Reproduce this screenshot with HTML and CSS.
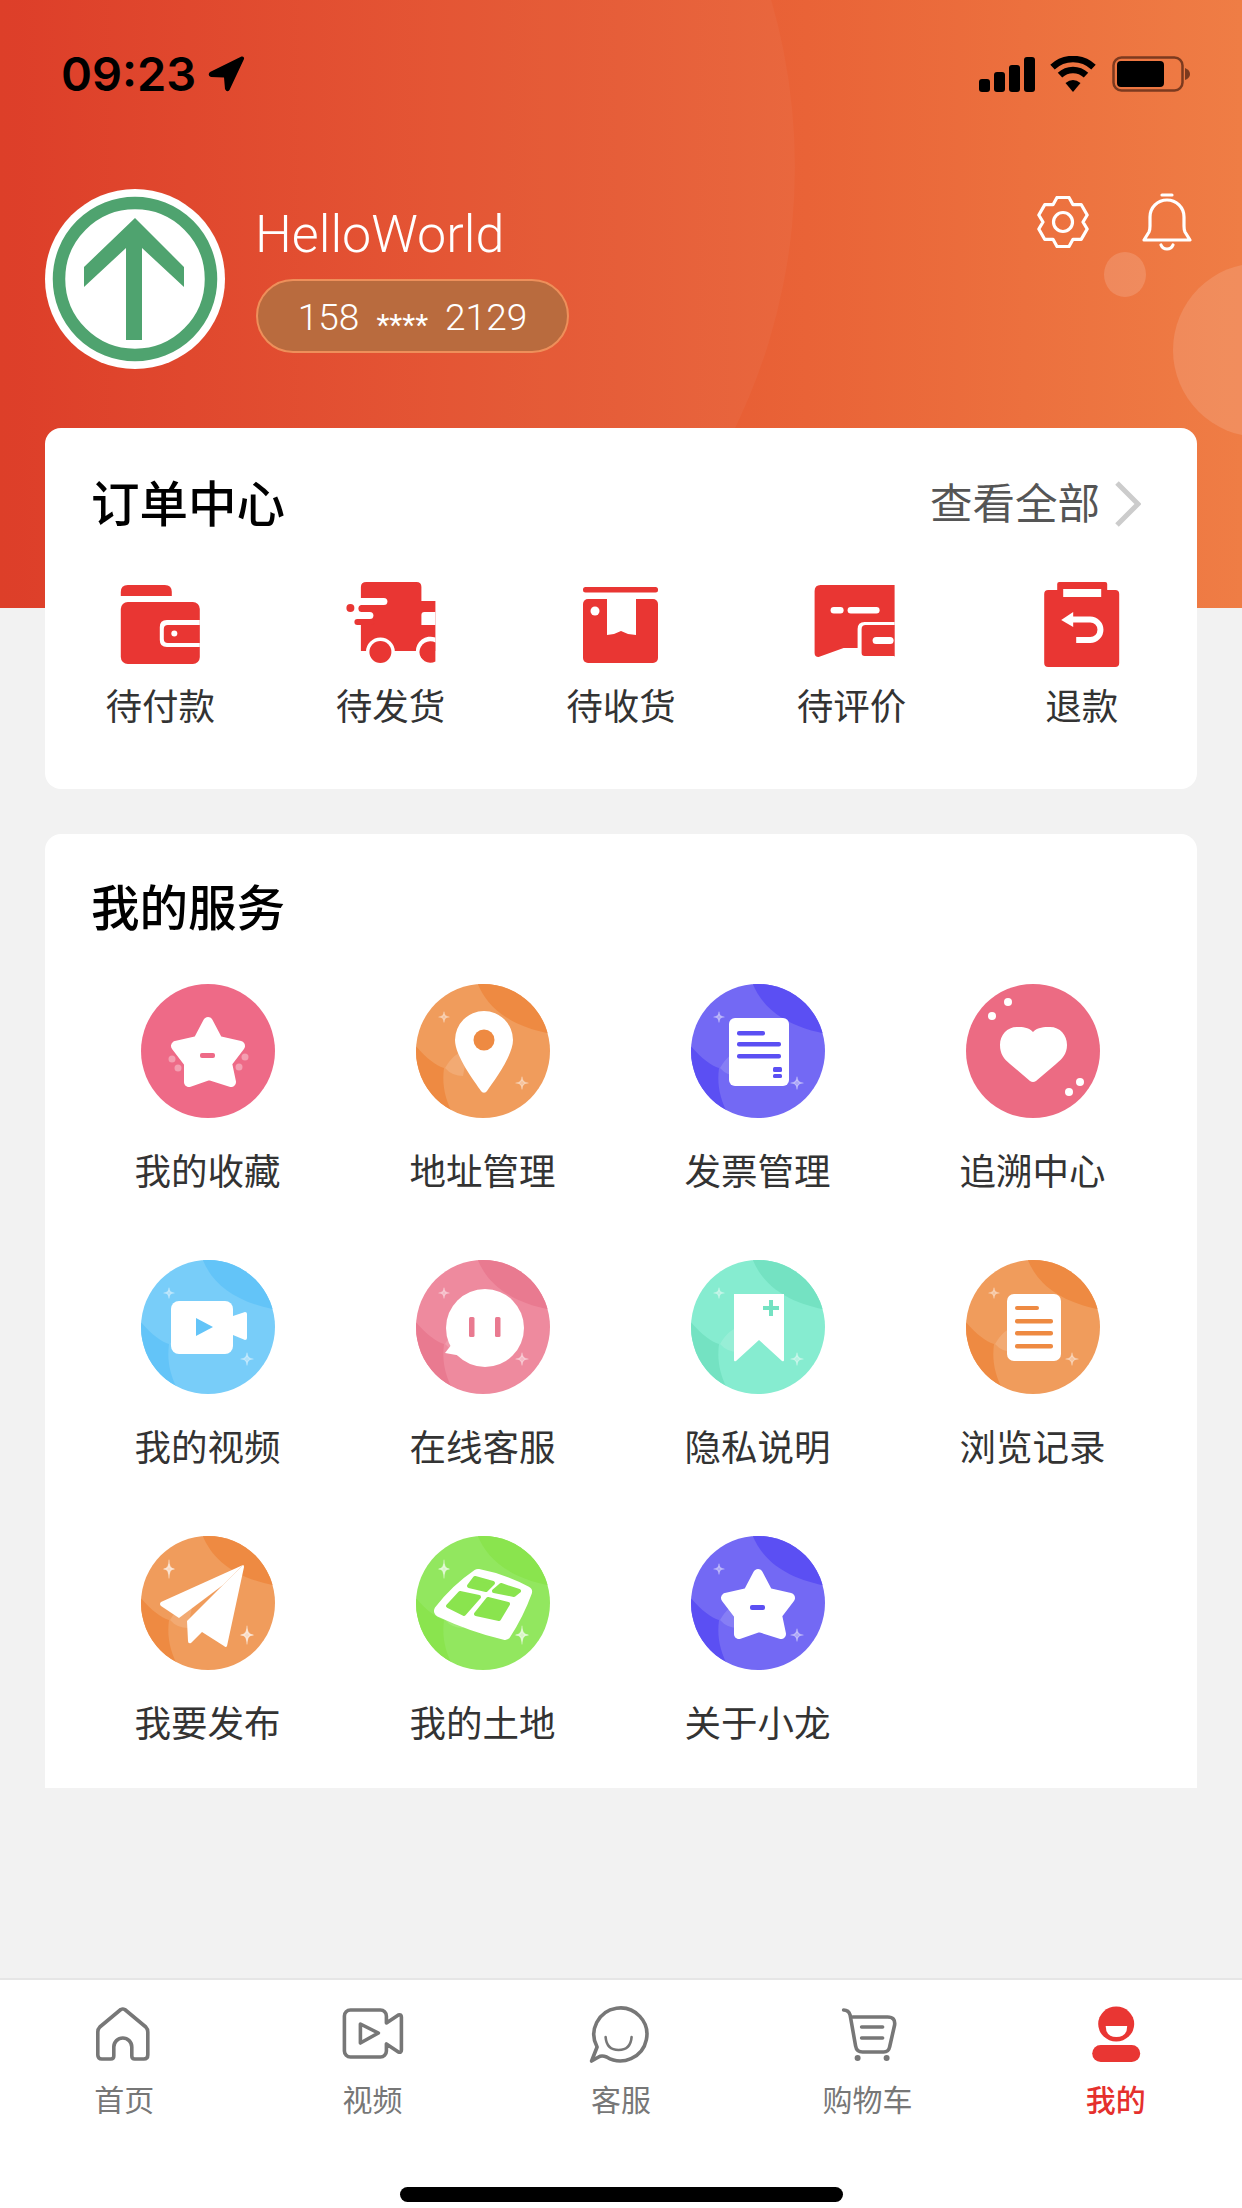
FILE: index.html
```html
<!DOCTYPE html>
<html lang="zh-CN">
<head>
<meta charset="utf-8">
<title>我的</title>
<link rel="stylesheet" href="styles.css">
</head>
<body>
<svg class="defs" aria-hidden="true">
  <defs>
    <clipPath id="cc"><circle cx="67" cy="67" r="67"/></clipPath>
    <symbol id="swirl" viewBox="0 0 134 134">
      <circle class="sw-l" cx="67" cy="67" r="67"/>
      <g clip-path="url(#cc)">
        <path class="sw-d" d="M61 -2C70 22 92 42 136 50V-2Z"/>
        <path class="sw-d" d="M-2 60C10 74 20 82 28 84C26 100 28 115 40 136H-2Z"/>
        <path class="sw-h" d="M29 84Q38 68 52 66L47 92Q36 92 29 84Z"/>
      </g>
      <path class="sw-s" d="M28 28Q28 33 33 33Q28 33 28 38Q28 33 23 33Q28 33 28 28Z"/>
      <path class="sw-s" d="M106 93Q106 99 112 99Q106 99 106 105Q106 99 100 99Q106 99 106 93Z"/>
    </symbol>
    <symbol id="star" viewBox="0 0 134 134">
      <path class="star-shape" d="M67 38L77 57L99 62L86 79L90 98L68 91L48 98L48 79L35 62L57 57Z"/>
      <rect class="ic-ink" x="59" y="69" width="15" height="5" rx="2"/>
    </symbol>
    <symbol id="spark-lg" viewBox="0 0 134 134">
      <path class="sw-s" d="M28 24Q28 33 33 33Q28 33 28 42Q28 33 23 33Q28 33 28 24Z"/>
      <path class="sw-s" d="M106 90Q106 99 112 99Q106 99 106 108Q106 99 100 99Q106 99 106 90Z"/>
    </symbol>
  </defs>
</svg>

<div class="page">
  <header class="hero">
    <div class="glow glow-a"></div>
    <div class="glow glow-b"></div>
    <div class="glow glow-c"></div>

    <div class="status">
      <div class="status-left">
        <span class="time">09:23</span>
        <svg class="loc" viewBox="0 0 37 37"><path d="M33.5.5L2 16Q-1 19 3 21L16 21.5L17 33Q19 37 21.5 34L36 3Q36.5 0 33.5.5Z"/></svg>
      </div>
      <div class="status-right">
        <svg class="signal" viewBox="0 0 56 35">
          <rect x="0" y="22" width="11" height="13" rx="3"/>
          <rect x="15" y="15" width="11" height="20" rx="3"/>
          <rect x="30" y="8" width="11" height="27" rx="3"/>
          <rect x="45" y="0" width="11" height="35" rx="3"/>
        </svg>
        <svg class="wifi" viewBox="0 0 48 36">
          <path class="wifi-arc" d="M3.5 11.1A30 30 0 0 1 44.5 11.1"/>
          <path class="wifi-arc" d="M11 19.1A19 19 0 0 1 37 19.1"/>
          <path d="M24 36L16.5 27Q24 21 31.5 27Z"/>
        </svg>
        <svg class="battery" viewBox="0 0 78 36">
          <rect class="bat-shell" x="1.5" y="1.5" width="69" height="33" rx="8"/>
          <rect x="5" y="5" width="47" height="26" rx="4"/>
          <path class="bat-nub" d="M73 12Q78 14 78 18Q78 22 73 24Z"/>
        </svg>
      </div>
    </div>

    <div class="profile">
      <svg class="avatar" viewBox="0 0 180 180">
        <circle class="av-bg" cx="90" cy="90" r="90"/>
        <circle class="av-ring" cx="90" cy="90" r="76"/>
        <path class="av-arrow" d="M90 29L139 78V98L97 59V151H81V59L39 98V78Z"/>
      </svg>
      <div class="who">
        <div class="name">HelloWorld</div>
        <div class="phone"><span>158</span><span class="stars">****</span><span>2129</span></div>
      </div>
      <div class="hero-actions">
        <svg class="gear" viewBox="0 0 52 52">
          <path d="M20 1.5H32L36 8.7L44.2 8.55L50.2 18.95L46 26L50.2 33L44.2 43.4L36 43.3L32 50.5H20L16 43.3L7.8 43.45L1.8 33L6 26L1.8 19L7.8 8.6L16 8.7Z"/>
          <circle cx="26" cy="26" r="9.5"/>
        </svg>
        <svg class="bell" viewBox="0 0 52 60">
          <path d="M21 2H31"/>
          <path d="M3 47L8 39Q9 37 9 33V24A17 17 0 0 1 43 24V33Q43 37 44 39L49 47Z"/>
          <path d="M20 52A6.5 6.5 0 0 0 32 52"/>
        </svg>
      </div>
    </div>
  </header>

  <main class="content">
    <section class="card card-orders">
      <div class="card-head">
        <h2 class="card-title">订单中心</h2>
        <div class="see-all">
          <span>查看全部</span>
          <svg class="chev" viewBox="0 0 26 46"><path d="M2 2L23 23L2 44"/></svg>
        </div>
      </div>
      <div class="orders">
        <div class="order">
          <svg class="order-ic" viewBox="0 0 90 90"><g transform="translate(5.8 5)">
            <path class="red" d="M0 11V7Q0 0 7 0H44Q51 0 51 7V11Z"/>
            <rect class="red" x="0" y="17" width="79" height="62" rx="7"/>
            <path class="wht" d="M79 35H46Q39 35 39 42V55Q39 62 46 62H79Z"/>
            <path class="red" d="M79 40H47Q43 40 43 44V54Q43 58 47 58H79Z"/>
            <circle class="wht" cx="53.5" cy="48.5" r="3"/>
          </g></svg>
          <span class="order-label">待付款</span>
        </div>
        <div class="order">
          <svg class="order-ic" viewBox="0 0 90 90"><g transform="translate(.4 2)">
            <path class="red" d="M14.5 5Q14.5 0 20 0H70Q75 0 75 5V19H89V69H14.5Z"/>
            <path class="wht" d="M89 30H78Q75 30 75 33V43H89Z"/>
            <rect class="wht" x="8" y="16" width="33" height="7" rx="3.5"/>
            <rect class="wht" x="8" y="30" width="19" height="7" rx="3.5"/>
            <rect class="red" x="12" y="23" width="20" height="7" rx="3.5"/>
            <rect class="red" x="8" y="37" width="20" height="6" rx="3"/>
            <circle class="red" cx="4" cy="26" r="4"/>
            <circle class="wht" cx="34" cy="70" r="14.5"/>
            <circle class="red" cx="34" cy="70" r="11"/>
            <path class="wht" d="M89 55.6A14.5 14.5 0 0 0 69.5 70A14.5 14.5 0 0 0 89 84.4Z"/>
            <path class="red" d="M89 60.5A11 11 0 0 0 73 70A11 11 0 0 0 89 79.5Z"/>
          </g></svg>
          <span class="order-label">待发货</span>
        </div>
        <div class="order">
          <svg class="order-ic" viewBox="0 0 90 90"><g transform="translate(7 7)">
            <rect class="red" x="0" y="0" width="75" height="5.5" rx="2.5"/>
            <rect class="red" x="0" y="12" width="75" height="64" rx="5"/>
            <path class="wht" d="M24 12H53V48L45 47L38 44L31 47L24 48Z"/>
            <circle class="wht" cx="12" cy="24" r="4.5"/>
          </g></svg>
          <span class="order-label">待收货</span>
        </div>
        <div class="order">
          <svg class="order-ic" viewBox="0 0 90 90"><g transform="translate(8.6 5)">
            <path class="red" d="M6 0H80V72L47 70V63H29L4 72Q0 72 0 68V6Q0 0 6 0Z"/>
            <path class="wht" d="M80 37H50Q43 37 43 44V72H80Z"/>
            <path class="red" d="M80 40H51Q47 40 47 44V68Q47 71 50 71H80Z"/>
            <rect class="wht" x="58" y="52" width="21" height="7" rx="3.5"/>
            <rect class="wht" x="16" y="22" width="13" height="6.5" rx="3.2"/>
            <rect class="wht" x="33" y="22" width="32" height="6.5" rx="3.2"/>
          </g></svg>
          <span class="order-label">待评价</span>
        </div>
        <div class="order">
          <svg class="order-ic" viewBox="0 0 90 90"><g transform="translate(7.2 2)">
            <path class="red" d="M13 8V2Q13 0 15 0H61Q63 0 63 2V8H71Q75 8 75 12V81Q75 85 71 85H4Q0 85 0 81V12Q0 8 4 8Z"/>
            <rect class="wht" x="19" y="7" width="38" height="8"/>
            <path class="ret" d="M27 37.5H46A10.2 10.2 0 0 1 46 58H32"/>
            <path class="wht" d="M17 38L29 30V45Z"/>
          </g></svg>
          <span class="order-label">退款</span>
        </div>
      </div>
    </section>

    <section class="card card-services">
      <h2 class="card-title">我的服务</h2>
      <div class="services">
        <div class="svc">
          <svg class="svc-ic tone-rose" viewBox="0 0 134 134">
            <circle class="flat" cx="67" cy="67" r="67"/>
            <use href="#star" width="134" height="134"/>
            <circle class="spot" cx="31" cy="75" r="3.5"/><circle class="spot" cx="37" cy="84" r="3.5"/>
            <circle class="spot" cx="104" cy="73" r="3.5"/><circle class="spot" cx="98" cy="83" r="3.5"/>
          </svg>
          <span class="svc-label">我的收藏</span>
        </div>
        <div class="svc">
          <svg class="svc-ic tone-orange" viewBox="0 0 134 134">
            <use href="#swirl" width="134" height="134"/>
            <path class="ic-w" d="M68 27A29 29 0 0 1 97 56C97 72 77 98 71 107A3.5 3.5 0 0 1 65 107C59 98 39 72 39 56A29 29 0 0 1 68 27Z"/>
            <circle class="ic-ink" cx="68" cy="56" r="10.5"/>
          </svg>
          <span class="svc-label">地址管理</span>
        </div>
        <div class="svc">
          <svg class="svc-ic tone-violet" viewBox="0 0 134 134">
            <use href="#swirl" width="134" height="134"/>
            <rect class="ic-w" x="38" y="34" width="60" height="68" rx="6"/>
            <rect class="ic-ink" x="46" y="47" width="28" height="4.5" rx="2"/>
            <rect class="ic-ink" x="46" y="58" width="44" height="4.5" rx="2"/>
            <rect class="ic-ink" x="46" y="70" width="44" height="4.5" rx="2"/>
            <rect class="ic-ink" x="82" y="83" width="9" height="5" rx="1.5"/>
            <rect class="ic-ink" x="82" y="90" width="9" height="4" rx="1.5"/>
          </svg>
          <span class="svc-label">发票管理</span>
        </div>
        <div class="svc">
          <svg class="svc-ic tone-coral" viewBox="0 0 134 134">
            <circle class="flat" cx="67" cy="67" r="67"/>
            <path class="ic-w" d="M67 48C72 43 78 43 84 43C94 43 101 51 101 61C101 70 96 75 90 80L70 97Q67 99 64 97L44 80C38 75 34 70 34 61C34 51 41 43 51 43C57 43 62 43 67 48Z"/>
            <circle class="ic-w" cx="42" cy="18" r="4"/><circle class="ic-w" cx="26" cy="32" r="4"/>
            <circle class="ic-w" cx="114" cy="98" r="4"/><circle class="ic-w" cx="103" cy="108" r="4"/>
          </svg>
          <span class="svc-label">追溯中心</span>
        </div>

        <div class="svc">
          <svg class="svc-ic tone-sky" viewBox="0 0 134 134">
            <use href="#swirl" width="134" height="134"/>
            <rect class="ic-w" x="30" y="41" width="62" height="53" rx="8"/>
            <path class="ic-w" d="M92 56L104 52Q106 52 106 54V78Q106 80 104 80L92 75Z"/>
            <path class="ic-ink" d="M55 58L72 67L55 76Z"/>
          </svg>
          <span class="svc-label">我的视频</span>
        </div>
        <div class="svc">
          <svg class="svc-ic tone-pink" viewBox="0 0 134 134">
            <use href="#swirl" width="134" height="134"/>
            <circle class="ic-w" cx="69" cy="68" r="39"/>
            <path class="ic-w" d="M36 84L29 93L46 96Z"/>
            <rect class="ic-ink" x="53" y="57" width="5.5" height="20" rx="1.5"/>
            <rect class="ic-ink" x="79" y="57" width="5.5" height="20" rx="1.5"/>
          </svg>
          <span class="svc-label">在线客服</span>
        </div>
        <div class="svc">
          <svg class="svc-ic tone-mint" viewBox="0 0 134 134">
            <use href="#swirl" width="134" height="134"/>
            <path class="ic-w" d="M43 34H93V100Q93 102 91 101L68 80L45 101Q43 102 43 100Z"/>
            <path class="ic-ink" d="M78 40H82V46H88V50H82V56H78V50H72V46H78Z"/>
          </svg>
          <span class="svc-label">隐私说明</span>
        </div>
        <div class="svc">
          <svg class="svc-ic tone-orange" viewBox="0 0 134 134">
            <use href="#swirl" width="134" height="134"/>
            <rect class="ic-w" x="41" y="34" width="54" height="67" rx="7"/>
            <rect class="ic-ink" x="49" y="46" width="24" height="4" rx="2"/>
            <rect class="ic-ink" x="49" y="59" width="38" height="4.5" rx="2"/>
            <rect class="ic-ink" x="49" y="71" width="38" height="4.5" rx="2"/>
            <rect class="ic-ink" x="49" y="84" width="38" height="4.5" rx="2"/>
          </svg>
          <span class="svc-label">浏览记录</span>
        </div>

        <div class="svc">
          <svg class="svc-ic tone-orange" viewBox="0 0 134 134">
            <use href="#swirl" width="134" height="134"/>
            <use href="#spark-lg" width="134" height="134"/>
            <path class="ic-w" d="M102 29L20 66Q18 68 20 70L38 82L82 49Z"/>
            <path class="ic-w" d="M102 29Q103 29 103 31L86 110Q85 112 83 110L61 96L50 107Q47 108 47 105L46 85L82 49Z"/>
          </svg>
          <span class="svc-label">我要发布</span>
        </div>
        <div class="svc">
          <svg class="svc-ic tone-lime" viewBox="0 0 134 134">
            <use href="#swirl" width="134" height="134"/>
            <use href="#spark-lg" width="134" height="134"/>
            <path class="land" d="M62 39Q88 44 110 56Q102 78 89 98Q56 90 24 75Q40 54 62 39Z"/>
            <path class="ic-ink cell" d="M59 42L77 47L70 54L53 50Z"/>
            <path class="ic-ink cell" d="M85 49L103 55L98 59L78 55Z"/>
            <path class="ic-ink cell" d="M44 57L63 61L48 78L32 70Z"/>
            <path class="ic-ink cell" d="M72 63L92 68L83 83L60 78Z"/>
          </svg>
          <span class="svc-label">我的土地</span>
        </div>
        <div class="svc">
          <svg class="svc-ic tone-violet" viewBox="0 0 134 134">
            <use href="#swirl" width="134" height="134"/>
            <use href="#star" width="134" height="134"/>
          </svg>
          <span class="svc-label">关于小龙</span>
        </div>
      </div>
    </section>
  </main>

  <footer class="tabbar">
    <nav class="tabs">
      <div class="tab">
        <svg class="tab-ic" viewBox="0 0 64 60"><g transform="translate(3.8 2)">
          <path d="M25 2.5Q27 1.5 29 2.5L50 20Q52 22 52 25V48Q52 52 48 52H39Q36 52 36 49V40A9 9 0 0 0 18 40V49Q18 52 15 52H6Q2 52 2 48V25Q2 22 4 20Z"/>
        </g></svg>
        <span>首页</span>
      </div>
      <div class="tab">
        <svg class="tab-ic" viewBox="0 0 64 60"><g transform="translate(1.4 3)">
          <path d="M8 2H38A6 6 0 0 1 44 8V15L56 7Q59 6 59 9V42Q59 45 56 44L44 36V43A6 6 0 0 1 38 49H8A6 6 0 0 1 2 43V8A6 6 0 0 1 8 2Z"/>
          <path d="M18 16L36 25L18 35Z"/>
        </g></svg>
        <span>视频</span>
      </div>
      <div class="tab">
        <svg class="tab-ic" viewBox="0 0 64 60"><g transform="translate(.6 1)">
          <path d="M7.5 41A26.5 26.5 0 1 1 17 51Q12 49 9 51L2 55Z"/>
          <path class="thin" d="M16 31Q17 44 29 44Q41 44 42 31"/>
        </g></svg>
        <span>客服</span>
      </div>
      <div class="tab">
        <svg class="tab-ic" viewBox="0 0 64 60"><g transform="translate(4.6 2)">
          <path d="M2 3Q7 3 8.5 8L14 39Q15 45 21 45H42Q47 45 48 40L53 18Q54 10 46 10H11"/>
          <path d="M20 20H41M20 31H41"/>
          <circle class="dot" cx="16" cy="51" r="3"/><circle class="dot" cx="45" cy="51" r="3"/>
        </g></svg>
        <span class="nudge">购物车</span>
      </div>
      <div class="tab tab-on">
        <svg class="tab-ic" viewBox="0 0 64 60"><g transform="translate(6.2 2)">
          <ellipse class="red" cx="24" cy="17" rx="18" ry="17.5"/>
          <path class="wht" d="M13.5 19H35Q35 30 24.2 30Q13.5 30 13.5 19Z"/>
          <rect class="red" x="0" y="38" width="48" height="17" rx="8.5"/>
        </g></svg>
        <span class="nudge">我的</span>
      </div>
    </nav>
    <div class="home-bar"></div>
  </footer>
</div>
</body>
</html>
```

FILE: styles.css
```css
* { box-sizing: border-box; }

html, body { margin: 0; padding: 0; }

body {
  width: 1242px;
  height: 2208px;
  overflow: hidden;
  font-family: "Noto Sans CJK SC", "Noto Sans", sans-serif;
}

.defs { position: absolute; width: 0; height: 0; }

.page {
  position: relative;
  width: 1242px;
  height: 2208px;
  display: flex;
  flex-direction: column;
  background: #f2f2f2;
}

/* hero */
.hero {
  position: relative;
  height: 608px;
  flex: none;
  overflow: hidden;
  background: linear-gradient(90deg, #dc3822 0%, #e96337 65%, #ef7d45 100%);
}

.glow { position: absolute; border-radius: 50%; }
.glow-a { left: -405px; top: -433px; width: 1200px; height: 1200px; background: rgba(255, 255, 255, .035); }
.glow-b { left: 1104px; top: 252px; width: 42px; height: 45px; background: rgba(255, 255, 255, .15); }
.glow-c { left: 1173px; top: 263px; width: 174px; height: 174px; background: rgba(255, 255, 255, .13); }

.status {
  position: relative;
  display: flex;
  justify-content: space-between;
  padding: 56px 52px 0 61px;
  height: 92px;
}

.status-left { display: flex; align-items: center; gap: 12px; height: 36px; }
.time { font: 600 47px/36px Inter, "Liberation Sans", sans-serif; color: #000; }
.loc { width: 37px; height: 37px; fill: #000; }

.status-right { display: flex; align-items: center; gap: 14px; height: 36px; }
.signal { width: 56px; height: 35px; fill: #000; }
.wifi { width: 48px; height: 36px; fill: #000; }
.wifi-arc { fill: none; stroke: #000; stroke-width: 6.5; }
.battery { width: 78px; height: 36px; margin-left: 1px; fill: #000; }
.bat-shell { fill: none; stroke: #7c3a1f; stroke-width: 2.5; }
.bat-nub { fill: #7c3a1f; }

.profile {
  position: relative;
  display: flex;
  align-items: flex-start;
  margin-top: 97px;
  padding: 0 49px 0 45px;
}

.avatar { width: 180px; height: 180px; flex: none; }
.av-bg { fill: #fff; }
.av-ring { fill: none; stroke: #4fa36f; stroke-width: 12.5; }
.av-arrow { fill: #4fa36f; }

.who { margin: 21px 0 0 30px; }

.name {
  font: 300 52px/50px Roboto, "Liberation Sans", sans-serif;
  color: #fff;
}

.phone {
  display: flex;
  align-items: baseline;
  justify-content: center;
  gap: 17px;
  width: 313px;
  height: 74px;
  margin: 19px 0 0 1px;
  padding-top: 18px;
  border: 2px solid #ee8f5a;
  border-radius: 37px;
  background: #b96b3e;
  color: #fff;
  font: 300 37px/1 Roboto, "Liberation Sans", sans-serif;
}

.stars { font-size: 30px; font-weight: 400; transform: translateY(5px); }

.hero-actions {
  display: flex;
  align-items: flex-start;
  gap: 52px;
  margin: 4px 0 0 auto;
}

.gear { width: 52px; height: 52px; margin-top: 3px; fill: none; stroke: #fff; stroke-width: 3.2; stroke-linejoin: round; }
.bell { width: 52px; height: 60px; fill: none; stroke: #fff; stroke-width: 3.2; stroke-linecap: round; stroke-linejoin: round; }

/* content */
.content {
  display: flex;
  flex-direction: column;
  gap: 45px;
  margin-top: -180px;
  padding: 0 45px;
  position: relative;
}

.card { background: #fff; border-radius: 16px; }

.card-title {
  margin: 0;
  font-size: 48.5px;
  font-weight: 500;
  line-height: 52px;
  color: #000;
}

.card-orders { height: 361px; padding-top: 47px; }

.card-head {
  display: flex;
  justify-content: space-between;
  align-items: center;
  padding: 0 56px 0 46px;
  height: 52px;
}

.see-all {
  display: flex;
  align-items: center;
  gap: 15px;
  font-size: 42.5px;
  line-height: 52px;
  color: #555;
}

.chev { width: 26px; height: 46px; margin-top: 6px; fill: none; stroke: #ccc; stroke-width: 5; }

.orders {
  display: grid;
  grid-template-columns: repeat(5, 1fr);
  margin-top: 53px;
}

.order { display: flex; flex-direction: column; align-items: center; }
.order-ic { width: 90px; height: 90px; display: block; }
.order-label { margin-top: 10px; font-size: 36.5px; line-height: 50px; color: #333; }

.red { fill: #e93633; }
.wht { fill: #fff; }
.ret { fill: none; stroke: #fff; stroke-width: 6; }

.card-services {
  height: 954px;
  padding: 45px 27px 0 25px;
  border-radius: 16px 16px 0 0;
}

.card-services > .card-title { padding-left: 21px; }

.services {
  display: grid;
  grid-template-columns: repeat(4, 1fr);
  row-gap: 65px;
  margin-top: 53px;
}

.svc { display: flex; flex-direction: column; align-items: center; }
.svc-ic { width: 134px; height: 134px; display: block; }
.svc-label { margin-top: 27px; font-size: 36.5px; line-height: 50px; color: #333; }

.flat { fill: var(--d); }
.sw-l { fill: var(--l); }
.sw-d { fill: var(--d); }
.sw-h { fill: rgba(255, 255, 255, .14); }
.sw-s { fill: rgba(255, 255, 255, .4); stroke: rgba(255, 255, 255, .4); stroke-width: 1.2; stroke-linejoin: round; }
.spot { fill: rgba(255, 255, 255, .35); }
.ic-w { fill: #fff; }
.ic-ink { fill: var(--d); }
.star-shape { fill: #fff; stroke: #fff; stroke-width: 10; stroke-linejoin: round; }
.land { fill: #fff; stroke: #fff; stroke-width: 12; stroke-linejoin: round; }
.cell { stroke: var(--d); stroke-width: 4; stroke-linejoin: round; }

.tone-rose { --d: #ee6a87; --l: #ee6a87; }
.tone-coral { --d: #ec6b83; --l: #ec6b83; }
.tone-orange { --d: #ee8a42; --l: #f09c5c; }
.tone-violet { --d: #5b4ff3; --l: #7369f4; }
.tone-sky { --d: #63c4f8; --l: #78cdf9; }
.tone-pink { --d: #e97a90; --l: #ee8a9e; }
.tone-mint { --d: #74e2c2; --l: #86ecd0; }
.tone-lime { --d: #8ae44e; --l: #92e75f; }

/* tab bar */
.tabbar {
  margin-top: auto;
  height: 230px;
  flex: none;
  display: flex;
  flex-direction: column;
  align-items: center;
  background: #fff;
  border-top: 2px solid #e6e6e6;
}

.tabs {
  align-self: stretch;
  display: grid;
  grid-template-columns: repeat(5, 1fr);
  padding-top: 25px;
}

.tab {
  display: flex;
  flex-direction: column;
  align-items: center;
  font-size: 30px;
  line-height: 40px;
  color: #777;
}

.tab span { margin-top: 13px; margin-bottom: 3px; }
.tab .nudge { margin-right: 4px; }

.tab-ic {
  width: 64px;
  height: 60px;
  display: block;
  fill: none;
  stroke: #777;
  stroke-width: 3.6;
  stroke-linecap: round;
  stroke-linejoin: round;
}

.tab-ic .thin { stroke-width: 2.6; }
.tab-ic .dot { fill: #777; stroke: none; }
.tab-ic .red, .tab-ic .wht { stroke: none; }

.tab-on { color: #e5302d; font-weight: 500; }

.home-bar {
  width: 443px;
  height: 15px;
  margin-top: 66px;
  border-radius: 8px;
  background: #000;
}
```
